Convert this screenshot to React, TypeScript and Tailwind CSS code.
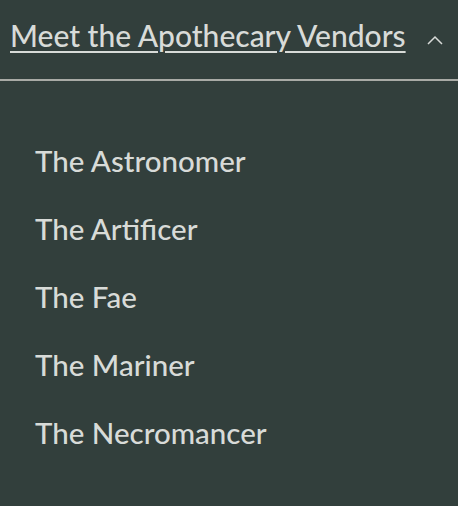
import React from "react";

const vendors = [
  "The Astronomer",
  "The Artificer",
  "The Fae",
  "The Mariner",
  "The Necromancer",
];

export default function App() {
  return (
    <div
      className="min-h-[506px] w-full bg-[#323f3c] text-[#d8dbd8]"
      style={{ fontFamily: "Lato, 'Noto Sans', sans-serif" }}
    >
      {/* Toggle header */}
      <button className="flex h-[79px] w-full items-center justify-between pl-[10px] pr-[15px] pb-[10px]">
        <span className="text-[30px] font-medium leading-none underline decoration-2 underline-offset-[4px]">
          Meet the Apothecary Vendors
        </span>
        <svg
          width="16"
          height="10"
          viewBox="0 0 16 10"
          fill="none"
          stroke="currentColor"
          strokeWidth="1.5"
          className="mt-[10px]"
        >
          <path d="M1 9 L8 2 L15 9" />
        </svg>
      </button>
      <div className="h-[2px] w-full bg-[#a9aba6]" />

      {/* Vendor list */}
      <ul className="flex flex-col pl-[35px] pt-[46px]">
        {vendors.map((v) => (
          <li key={v} className="flex h-[68px] items-center text-[29.5px] font-medium">
            {v}
          </li>
        ))}
      </ul>
    </div>
  );
}
